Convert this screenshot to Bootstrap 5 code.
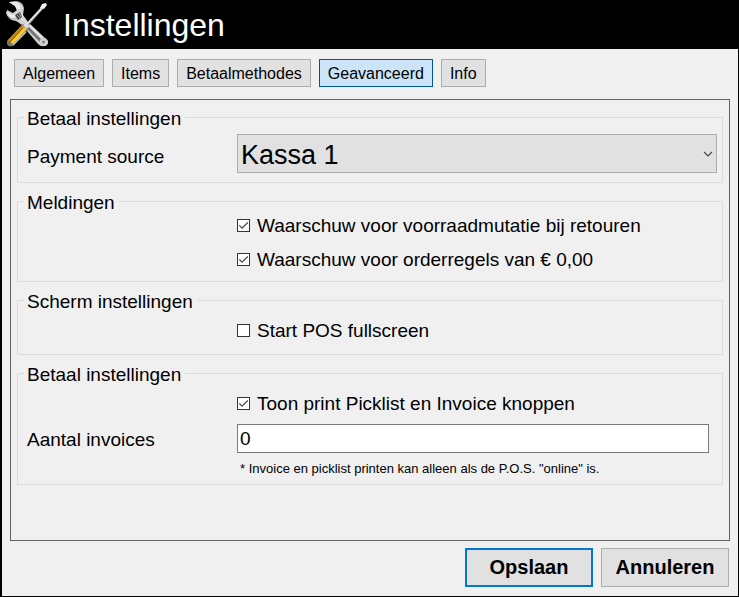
<!DOCTYPE html>
<html lang="nl">
<head>
<meta charset="utf-8">
<meta name="viewport" content="width=device-width, initial-scale=1">
<title>Instellingen</title>
<link href="https://cdn.jsdelivr.net/npm/bootstrap@5.3.0/dist/css/bootstrap.min.css" rel="stylesheet">
<style>
  body { font-family: "Liberation Sans", Arial, sans-serif; font-size: 19px; line-height: 25px; color: #000; background: #f0f0f0; }
  .app-window { border: solid #000; border-width: 0 1px 1px 2px; }
  .app-header { background: #000; color: #fff; height: 49px; padding-left: 2px; gap: 13px; }
  .app-header svg { width: 46px; height: 48px; }
  .app-title { font-size: 32px; line-height: 48px; font-weight: 400; }
  .tab-bar { padding: 10px 12px 12px; }
  .btn { --bs-btn-border-radius: 0; --bs-btn-color: #000; --bs-btn-bg: #e1e1e1; --bs-btn-border-color: #adadad;
    --bs-btn-hover-color: #000; --bs-btn-hover-bg: #e5f1fb; --bs-btn-hover-border-color: #0078d7;
    --bs-btn-active-color: #000; --bs-btn-active-bg: #cce4f7; --bs-btn-active-border-color: #005499; }
  .btn-tab { --bs-btn-padding-x: 8px; --bs-btn-font-size: 16px; --bs-btn-line-height: 20px; padding-top: 4px; padding-bottom: 2px; }
  .btn-action { --bs-btn-padding-x: 4px; --bs-btn-padding-y: 0; --bs-btn-font-size: 20px; --bs-btn-font-weight: 700; width: 128px; height: 39px; padding-bottom: 2px; }
  .btn-default { --bs-btn-border-width: 2px; --bs-btn-border-color: #0078d7; }
  .panel { border: 1px solid #646464; margin: 0 8px; padding: 6px; gap: 7px; }
  .group { border: 1px solid #dcdcdc; padding: 0 5px 9px 6px; }
  .group legend { font-size: 19px; line-height: 20px; padding: 3px 4px 0 3px; }
  .group-select { padding-top: 5px; }
  .group-select .setting-label { padding-top: 5px; }
  .group-spaced { padding-top: 6px; }
  .group-roomy { padding-bottom: 11px; }
  .group-note { padding-bottom: 6px; }
  .setting { padding-left: 3px; }
  .setting-label { width: 210px; }
  .count-label { padding-top: 3px; }
  .checks { gap: 9px; }
  .check-line { gap: 7px; }
  .check-line .form-check-input { width: 13px; height: 13px; border: 1px solid #333; border-radius: 0; background-color: #fff; }
  .check-line .form-check-input:checked { background-color: #fff; border-color: #333;
    background-image: url("data:image/svg+xml,%3Csvg xmlns='http://www.w3.org/2000/svg' viewBox='0 0 11 11'%3E%3Cpath d='M1.3 5.4 4.1 8.2 9.8 2.5' fill='none' stroke='%23444' stroke-width='1.2'/%3E%3C/svg%3E"); }
  .source-select { height: 39px; padding: 3px 24px 0 3px; border: 1px solid #adadad; border-radius: 0; color: #000; font-size: 27px; line-height: 34px;
    background-color: #e1e1e1; background-position: right 3px center; background-size: 10px 6px;
    background-image: url("data:image/svg+xml,%3Csvg xmlns='http://www.w3.org/2000/svg' viewBox='0 0 10 6'%3E%3Cpath d='M1 1 5 5 9 1' fill='none' stroke='%23444' stroke-width='1.1'/%3E%3C/svg%3E"); }
  .count-input { height: 29px; padding: 0 2px; border: 1px solid #7a7a7a; border-radius: 0; color: #000; font-size: 19px; line-height: 27px; }
  .note { font-size: 13px; line-height: 18px; padding: 7px 0 0 3px; }
  .count-col { padding-right: 8px; }
  .actions { padding: 7px 9px 9px; }
</style>
<script src="https://cdn.jsdelivr.net/npm/bootstrap@5.3.0/dist/js/bootstrap.bundle.min.js" defer></script>
</head>
<body>
<div class="app-window d-flex flex-column min-vh-100">
  <header class="app-header d-flex align-items-center">
    <svg viewBox="0 0 46 48" aria-hidden="true">
      <defs>
        <linearGradient id="steel" x1="0" y1="1" x2="1" y2="0"><stop offset="0" stop-color="#8d8d8d"/><stop offset=".5" stop-color="#d9d9d9"/><stop offset="1" stop-color="#a5a5a5"/></linearGradient>
      </defs>
      <path d="M5 1 12 0Q19 1 20 7L19 14 24 21 41 37Q46 40 43 44 38 47 34 43L18 24 12 20Q4 19 2 12L3 9 9 12 13 9 11 5Z" fill="url(#steel)"/>
      <path d="M5 1 12 1Q17 3 17 8L13 9 11 5Z" fill="#eee"/>
      <path d="M2.500 11 9 14 14 12 10 17Q5 17 2.500 11Z" fill="#eee"/>
      <path d="M11 14 16 11 18 16 14 19Z" fill="#444"/>
      <path d="M13 14 17 18M15 12 17 16" stroke="#aaa"/>
      <path d="M24 27 37 40" stroke="#777" stroke-width="3"/>
      <path d="M26 25 39 38" stroke="#e8e8e8" stroke-width="1.500"/>
      <circle cx="39.500" cy="41" r="4" fill="#cfcfcf"/><circle cx="39.500" cy="41" r="1.500" fill="#888"/>
      <path d="M24 23 38 7" stroke="#777" stroke-width="3"/>
      <path d="M23 23 38 7" stroke="#f2f2f2" stroke-width="1.800"/>
      <path d="M36 7 38 3 42 2 43 4 40 8Z" fill="#eee"/>
      <path d="M3 40 18 24Q21 21 24 25 26 27 22 31L9 45Q2 47 3 40Z" fill="#777"/>
      <path d="M4 39 18 24 21 25 6 42Z" fill="#c98a10"/>
      <path d="M6 41 20 26 23 28 9 43Z" fill="#ffc928"/>
      <path d="M5 42 19 27" stroke="#765000" stroke-width="1"/>
      <path d="M9 44 22 31" stroke="#c4c4c4" stroke-width="1.500"/>
      <path d="M19 24 22 22 25 25 23 28Z" fill="#ddd"/>
    </svg>
    <h1 class="app-title m-0">Instellingen</h1>
  </header>

  <nav class="tab-bar d-flex flex-wrap gap-2" aria-label="Instellingen">
    <button type="button" class="btn btn-tab">Algemeen</button>
    <button type="button" class="btn btn-tab">Items</button>
    <button type="button" class="btn btn-tab">Betaalmethodes</button>
    <button type="button" class="btn btn-tab active" aria-current="page">Geavanceerd</button>
    <button type="button" class="btn btn-tab">Info</button>
  </nav>

  <form class="d-flex flex-column flex-grow-1">
    <div class="panel d-flex flex-column flex-grow-1">
      <fieldset class="group">
        <legend class="float-none w-auto m-0">Betaal instellingen</legend>
        <div class="setting group-select d-flex align-items-center">
          <label class="setting-label flex-shrink-0" for="source">Payment source</label>
          <select class="form-select source-select" id="source"><option>Kassa 1</option></select>
        </div>
      </fieldset>

      <fieldset class="group">
        <legend class="float-none w-auto m-0">Meldingen</legend>
        <div class="setting d-flex">
          <div class="setting-label flex-shrink-0"></div>
          <div class="checks d-flex flex-column">
            <div class="check-line d-flex align-items-center">
              <input class="form-check-input m-0 flex-shrink-0" type="checkbox" id="stock" checked>
              <label for="stock">Waarschuw voor voorraadmutatie bij retouren</label>
            </div>
            <div class="check-line d-flex align-items-center">
              <input class="form-check-input m-0 flex-shrink-0" type="checkbox" id="zero" checked>
              <label for="zero">Waarschuw voor orderregels van € 0,00</label>
            </div>
          </div>
        </div>
      </fieldset>

      <fieldset class="group group-roomy">
        <legend class="float-none w-auto m-0">Scherm instellingen</legend>
        <div class="setting group-spaced d-flex">
          <div class="setting-label flex-shrink-0"></div>
          <div class="check-line d-flex align-items-center">
            <input class="form-check-input m-0 flex-shrink-0" type="checkbox" id="fullscreen">
            <label for="fullscreen">Start POS fullscreen</label>
          </div>
        </div>
      </fieldset>

      <fieldset class="group group-note">
        <legend class="float-none w-auto m-0">Betaal instellingen</legend>
        <div class="setting group-spaced d-flex">
          <div class="setting-label flex-shrink-0"></div>
          <div class="check-line d-flex align-items-center">
            <input class="form-check-input m-0 flex-shrink-0" type="checkbox" id="picklist" checked>
            <label for="picklist">Toon print Picklist en Invoice knoppen</label>
          </div>
        </div>
        <div class="setting d-flex pt-2">
          <label class="setting-label count-label flex-shrink-0" for="count">Aantal invoices</label>
          <div class="count-col flex-grow-1">
            <input class="form-control count-input" type="text" id="count" value="0">
            <div class="note">* Invoice en picklist printen kan alleen als de P.O.S. "online" is.</div>
          </div>
        </div>
      </fieldset>
    </div>

    <div class="actions d-flex justify-content-end gap-2">
      <button type="submit" class="btn btn-action btn-default">Opslaan</button>
      <button type="button" class="btn btn-action">Annuleren</button>
    </div>
  </form>
</div>
</body>
</html>
